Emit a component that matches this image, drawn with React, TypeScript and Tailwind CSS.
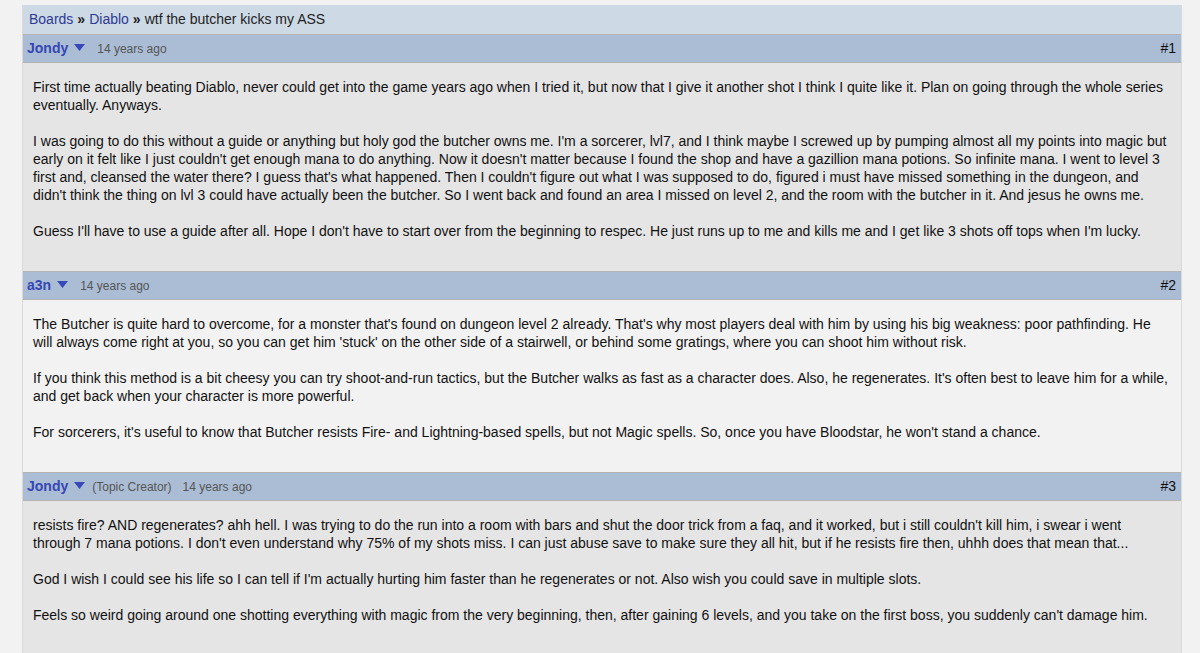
const posts = [
  {
    n: 1,
    user: "Jondy",
    creator: false,
    bg: "bg-[#e5e5e5]",
    paras: [
      "First time actually beating Diablo, never could get into the game years ago when I tried it, but now that I give it another shot I think I quite like it. Plan on going through the whole series eventually. Anyways.",
      "I was going to do this without a guide or anything but holy god the butcher owns me. I'm a sorcerer, lvl7, and I think maybe I screwed up by pumping almost all my points into magic but early on it felt like I just couldn't get enough mana to do anything. Now it doesn't matter because I found the shop and have a gazillion mana potions. So infinite mana. I went to level 3 first and, cleansed the water there? I guess that's what happened. Then I couldn't figure out what I was supposed to do, figured i must have missed something in the dungeon, and didn't think the thing on lvl 3 could have actually been the butcher. So I went back and found an area I missed on level 2, and the room with the butcher in it. And jesus he owns me.",
      "Guess I'll have to use a guide after all. Hope I don't have to start over from the beginning to respec. He just runs up to me and kills me and I get like 3 shots off tops when I'm lucky.",
    ],
  },
  {
    n: 2,
    user: "a3n",
    creator: false,
    bg: "bg-[#f2f2f2]",
    paras: [
      "The Butcher is quite hard to overcome, for a monster that's found on dungeon level 2 already. That's why most players deal with him by using his big weakness: poor pathfinding. He will always come right at you, so you can get him 'stuck' on the other side of a stairwell, or behind some gratings, where you can shoot him without risk.",
      "If you think this method is a bit cheesy you can try shoot-and-run tactics, but the Butcher walks as fast as a character does. Also, he regenerates. It's often best to leave him for a while, and get back when your character is more powerful.",
      "For sorcerers, it's useful to know that Butcher resists Fire- and Lightning-based spells, but not Magic spells. So, once you have Bloodstar, he won't stand a chance.",
    ],
  },
  {
    n: 3,
    user: "Jondy",
    creator: true,
    bg: "bg-[#e5e5e5]",
    paras: [
      "resists fire? AND regenerates? ahh hell. I was trying to do the run into a room with bars and shut the door trick from a faq, and it worked, but i still couldn't kill him, i swear i went through 7 mana potions. I don't even understand why 75% of my shots miss. I can just abuse save to make sure they all hit, but if he resists fire then, uhhh does that mean that...",
      "God I wish I could see his life so I can tell if I'm actually hurting him faster than he regenerates or not. Also wish you could save in multiple slots.",
      "Feels so weird going around one shotting everything with magic from the very beginning, then, after gaining 6 levels, and you take on the first boss, you suddenly can't damage him.",
    ],
  },
];

function Caret() {
  return (
    <svg width="11" height="7" viewBox="0 0 11 7" className="ml-[6px] mt-[-2px]">
      <path d="M0 0 H11 L5.5 7 Z" fill="#3848b8" />
    </svg>
  );
}

export default function App() {
  return (
    <div className="min-h-screen bg-[#f2f2f2] pt-[5px] font-['Liberation_Sans',Arial,sans-serif] text-[14px] text-[#111]">
      <div className="mx-[22px] w-[1160px] border-x border-[#d9d9d9]">
        {/* breadcrumb */}
        <div className="h-[29px] bg-[#cdd9e5] px-[6px] flex items-center text-[14px]">
          <a href="#" className="text-[#2d3a94]">Boards</a>
          <span className="mx-[4px] font-bold text-[#222]">»</span>
          <a href="#" className="text-[#2d3a94]">Diablo</a>
          <span className="mx-[4px] font-bold text-[#222]">»</span>
          <span className="text-[#222]">wtf the butcher kicks my ASS</span>
        </div>

        {posts.map((p) => (
          <div key={p.n}>
            <div className="h-[29px] border-y border-[#b4b4b4] bg-[#abbdd4] pl-[4px] pr-[5px] flex items-center">
              <a href="#" className="font-bold text-[#3646b4]">{p.user}</a>
              <Caret />
              {p.creator && (
                <span className="ml-[7px] text-[12px] text-[#555]">(Topic Creator)</span>
              )}
              <span className={`${p.creator ? "ml-[11px]" : "ml-[12px]"} text-[12px] text-[#555]`}>14 years ago</span>
              <span className="ml-auto text-[#111]">#{p.n}</span>
            </div>
            <div className={`${p.bg} pl-[10px] pr-[10px] pt-[15px] pb-[31px] leading-[18px]`}>
              {p.paras.map((t, i) => (
                <p key={i} className={i > 0 ? "mt-[18px]" : ""}>{t}</p>
              ))}
            </div>
          </div>
        ))}
      </div>
    </div>
  );
}
